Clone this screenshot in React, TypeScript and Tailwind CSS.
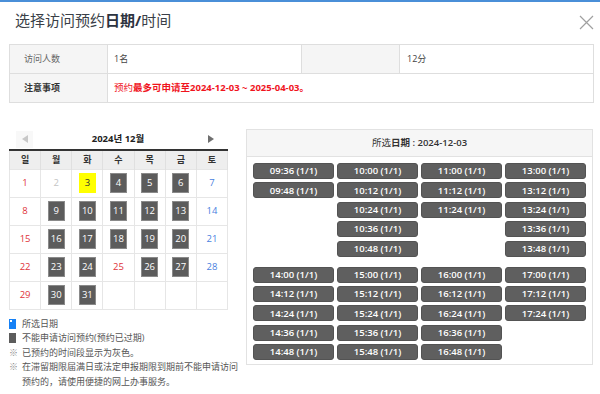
import React from "react";

const CN = "font-['Open_Sans','Noto_Sans_CJK_SC',sans-serif]";
const KR = "font-['Open_Sans','Noto_Sans_CJK_KR',sans-serif]";

type Day = { n?: number; t: "sun" | "sat" | "box" | "sel" | "dis" | "none" | "plain" };

const weeks: Day[][] = [
  [{ n: 1, t: "sun" }, { n: 2, t: "dis" }, { n: 3, t: "sel" }, { n: 4, t: "box" }, { n: 5, t: "box" }, { n: 6, t: "box" }, { n: 7, t: "sat" }],
  [{ n: 8, t: "sun" }, { n: 9, t: "box" }, { n: 10, t: "box" }, { n: 11, t: "box" }, { n: 12, t: "box" }, { n: 13, t: "box" }, { n: 14, t: "sat" }],
  [{ n: 15, t: "sun" }, { n: 16, t: "box" }, { n: 17, t: "box" }, { n: 18, t: "box" }, { n: 19, t: "box" }, { n: 20, t: "box" }, { n: 21, t: "sat" }],
  [{ n: 22, t: "sun" }, { n: 23, t: "box" }, { n: 24, t: "box" }, { n: 25, t: "sun" }, { n: 26, t: "box" }, { n: 27, t: "box" }, { n: 28, t: "sat" }],
  [{ n: 29, t: "sun" }, { n: 30, t: "box" }, { n: 31, t: "box" }, { t: "none" }, { t: "none" }, { t: "none" }, { t: "none" }],
];

const group1: string[][] = [
  ["09:36", "09:48"],
  ["10:00", "10:12", "10:24", "10:36", "10:48"],
  ["11:00", "11:12", "11:24"],
  ["13:00", "13:12", "13:24", "13:36", "13:48"],
];
const group2: string[][] = [
  ["14:00", "14:12", "14:24", "14:36", "14:48"],
  ["15:00", "15:12", "15:24", "15:36", "15:48"],
  ["16:00", "16:12", "16:24", "16:36", "16:48"],
  ["17:00", "17:12", "17:24"],
];

function DayCell({ d }: { d: Day }) {
  let inner: React.ReactNode = null;
  if (d.t === "box") {
    inner = (
      <div className="w-[17px] h-[20px] bg-[#5c5c5c] border border-[#8a8a8a] text-white flex items-center justify-center text-[9.5px]">
        {d.n}
      </div>
    );
  } else if (d.t === "sel") {
    inner = (
      <div className="w-[17px] h-[20px] bg-[#ffff00] text-[#333] flex items-center justify-center text-[9.5px]">{d.n}</div>
    );
  } else if (d.t !== "none") {
    const c = d.t === "sun" ? "text-[#e0333a]" : d.t === "sat" ? "text-[#4a7fe0]" : d.t === "dis" ? "text-[#c4c4c4]" : "text-[#333]";
    inner = <span className={`text-[9.5px] ${c}`}>{d.n}</span>;
  }
  return (
    <td className="h-[28px] border border-[#e6e6e6] p-0">
      <div className="flex items-center justify-center h-full">{inner}</div>
    </td>
  );
}

function Slots({ cols }: { cols: string[][] }) {
  return (
    <div className="grid grid-cols-[81px_81px_81px_81px] gap-x-[3px] items-start">
      {cols.map((c, i) => (
        <div key={i} className="flex flex-col gap-y-[3.4px]">
          {c.map((t) => (
            <div
              key={t}
              className="h-[16px] rounded-[3px] bg-[#5f5f5f] border border-[#535353] text-white text-[9.5px] font-semibold flex items-center justify-center leading-none font-['Open_Sans',sans-serif]"
            >
              {t} (1/1)
            </div>
          ))}
        </div>
      ))}
    </div>
  );
}

export default function App() {
  return (
    <div className={`w-[600px] h-[394px] bg-white overflow-hidden ${CN}`}>
      <div className="h-[2px] bg-[#4a8fd8]" />
      <div className="h-[42px] flex items-start justify-between pl-[15px] pr-[6px] pt-[8px]">
        <div className="text-[15px] leading-[20px] text-[#3a3f48]">
          选择访问预约<span className="font-bold text-[#2c3340]">日期/</span>时间
        </div>
        <svg width="15" height="15" viewBox="0 0 15 15" className="mt-[5px] shrink-0 block">
          <path d="M1 1 L14 14 M14 1 L1 14" stroke="#a0a0a0" strokeWidth="1.2" fill="none" />
        </svg>
      </div>

      <div className="px-[9px]">
        <table className="w-[584px] border-collapse table-fixed text-[9px]">
          <colgroup>
            <col className="w-[98px]" />
            <col className="w-[194px]" />
            <col className="w-[98px]" />
            <col className="w-[194px]" />
          </colgroup>
          <tbody>
            <tr className="h-[29px]">
              <td className="border border-[#dedede] bg-[#f5f5f5] pl-[14px] text-[#666]">访问人数</td>
              <td className="border border-[#dedede] pl-[6px] text-[#444]">1名</td>
              <td className="border border-[#dedede] bg-[#f5f5f5]"></td>
              <td className="border border-[#dedede] pl-[7px] text-[#444]">12分</td>
            </tr>
            <tr className="h-[29px]">
              <td className="border border-[#dedede] bg-[#f5f5f5] pl-[14px] text-[#333] font-semibold">注意事项</td>
              <td colSpan={3} className="border border-[#dedede] pl-[6px] text-[#f0141e] text-[9.5px]">
                预约<span className="font-bold">最多可申请至2024-12-03 ~ 2025-04-03。</span>
              </td>
            </tr>
          </tbody>
        </table>
      </div>

      <div className="flex justify-between pl-[9px] pr-[7px] mt-[26px]">
        <div className="w-[231px]">
          <div className="w-[219px]">
            <div className="h-[20px] flex items-center justify-between">
              <div className="w-[17px] h-[17px] ml-[7px] bg-[#f8f8f8] flex items-center justify-center">
                <svg width="6" height="8" viewBox="0 0 6 8">
                  <polygon points="6,0 0,4 6,8" fill="#c8c8c8" />
                </svg>
              </div>
              <div className={`text-[9.5px] font-bold text-[#222] ${KR}`}>2024년 12월</div>
              <div className="w-[17px] h-[17px] mr-[8px] flex items-center justify-center">
                <svg width="6" height="8" viewBox="0 0 6 8">
                  <polygon points="0,0 6,4 0,8" fill="#6f6f6f" />
                </svg>
              </div>
            </div>
            <table className={`w-[219px] border-collapse table-fixed ${KR}`}>
              <thead>
                <tr className="h-[19px] bg-[#eeeeee] border-t-2 border-t-[#333]">
                  {["일", "월", "화", "수", "목", "금", "토"].map((d) => (
                    <th key={d} className="border-x border-[#e0e0e0] text-[9px] font-semibold text-[#333] p-0">
                      {d}
                    </th>
                  ))}
                </tr>
              </thead>
              <tbody>
                {weeks.map((w, i) => (
                  <tr key={i}>
                    {w.map((d, j) => (
                      <DayCell key={j} d={d} />
                    ))}
                  </tr>
                ))}
              </tbody>
            </table>
          </div>

          <div className="mt-[7px] text-[9px] leading-[14.5px] text-[#555]">
            <div className="flex items-center">
              <div className="w-[7px] h-[10px] bg-[#1681f5] relative mr-[6px]">
                <div className="absolute left-[1px] top-[1px] w-[2px] h-[2px] bg-white" />
              </div>
              所选日期
            </div>
            <div className="flex items-center">
              <div className="w-[7px] h-[10px] bg-[#5c5c5c] mr-[6px]" />
              不能申请访问预约(预约已过期)
            </div>
            <div className="flex">
              <span className="w-[13px] shrink-0 text-[#888]">※</span>
              <span>已预约的时间段显示为灰色。</span>
            </div>
            <div className="flex">
              <span className="w-[13px] shrink-0 text-[#888]">※</span>
              <span className="whitespace-nowrap">
                在滞留期限届满日或法定申报期限到期前不能申请访问
                <br />
                预约的，请使用便捷的网上办事服务。
              </span>
            </div>
          </div>
        </div>

        <div className="w-[347px] h-[236px] border border-[#e2e2e2]">
          <div className="h-[27px] bg-[#f6f6f6] border-b border-[#e2e2e2] flex items-center justify-center text-[9.5px] text-[#333]">
            所选<span className="font-semibold">日期 : 2024-12-03</span>
          </div>
          <div className="px-[6px] pt-[6px] flex flex-col gap-[10px]">
            <Slots cols={group1} />
            <Slots cols={group2} />
          </div>
        </div>
      </div>
    </div>
  );
}
